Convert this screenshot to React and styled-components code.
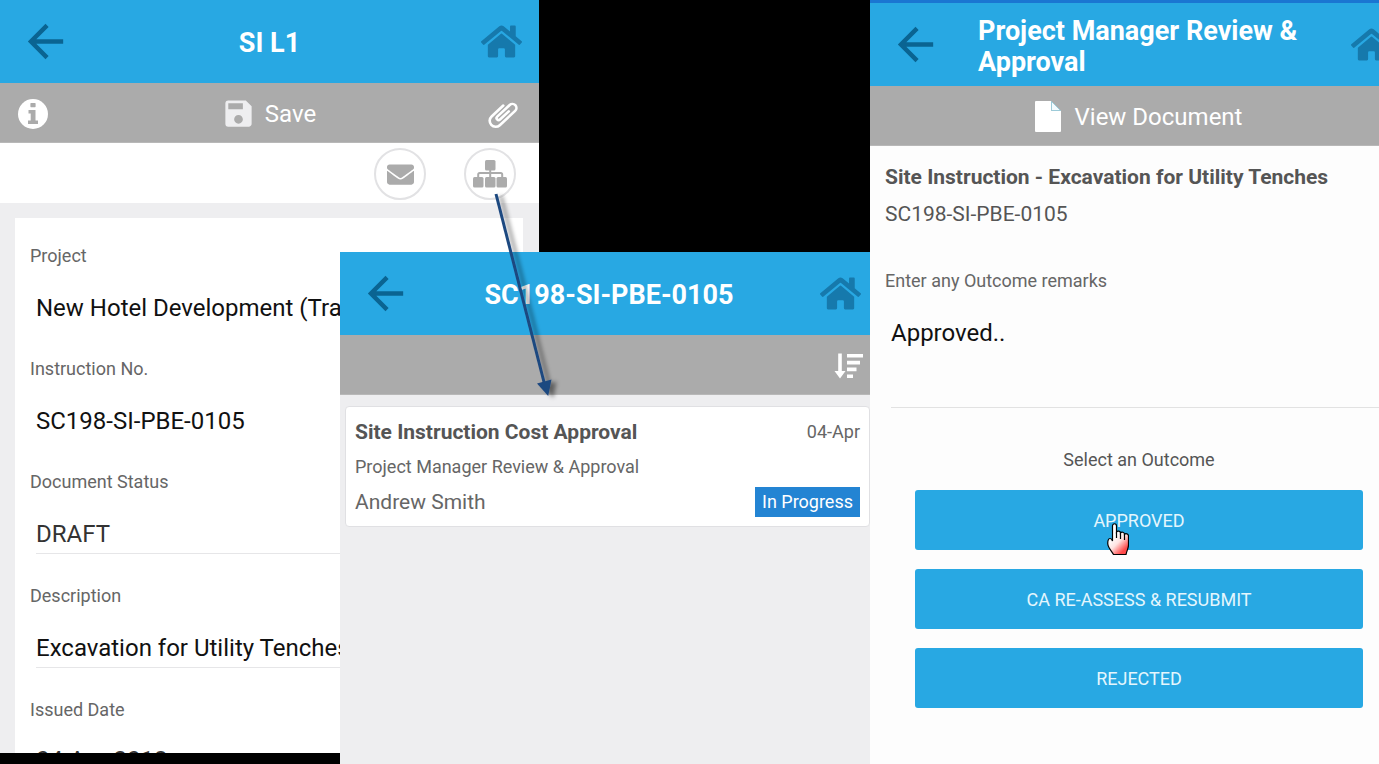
import React from "react";
import styled, { createGlobalStyle, css } from "styled-components";
import { FaEnvelope, FaHome } from "react-icons/fa";
import { MdArrowBack, MdSave } from "react-icons/md";

const GlobalStyle = createGlobalStyle`
  * {
    box-sizing: border-box;
  }

  body {
    margin: 0;
    background: #000;
    font-family: Roboto, "Liberation Sans", sans-serif;
    color: #555;
  }

  h1, h2, p {
    margin: 0;
  }

  button, input, textarea {
    font-family: inherit;
    padding: 0;
    border: 0;
    background: none;
  }
`

const Stage = styled.main`
  display: grid;
  grid-template-columns: 340fr 199fr 331fr 509fr;
  grid-template-rows: 252px minmax(0, 1fr) 11px;
  height: 100vh;
  overflow: hidden;
`

const Frame = styled.section`
  grid-column: ${p => p.$columns};
  grid-row: ${p => p.$rows};
  min-width: 0;
  min-height: 0;
  overflow: hidden;
  background: ${p => p.$background || '#eeeef0'};
`

// a phone screen can be wider than the frame that shows it
const Screen = styled.div`
  width: calc(100% + ${p => p.$overhang || 0}px);
  border-top: ${p => p.$strip ? '3px solid #1a76d2' : '0'};
`

const Header = styled.header`
  display: grid;
  grid-template-columns: 108px 1fr 108px;
  align-items: center;
  height: 83px;
  background: #28a8e3;
`

const Title = styled.h1`
  justify-self: center;
  padding-top: 4px;
  font-size: 27px;
  line-height: 31px;
  font-weight: 700;
  color: #fff;
`

const HeaderButton = styled.button`
  display: flex;
  justify-self: ${p => p.$end ? 'end' : 'start'};
  margin: ${p => p.$end ? '0 17px 0 0' : '0 0 0 19px'};
  color: ${p => p.$end ? '#1679ac' : '#0a6492'};
`

const Toolbar = styled.div`
  display: grid;
  grid-template-columns: 1fr auto 1fr;
  align-items: center;
  height: 60px;
  padding: 2px 20px 0 18px;
  border-bottom: 1px solid #b8b8b8;
  background: #ababab;
`

const ToolButton = styled.button`
  display: flex;
  align-items: center;
  gap: ${p => p.$gap || 0}px;
  grid-column: ${p => p.$column};
  justify-self: ${p => p.$end ? 'end' : 'start'};
  margin-right: ${p => p.$flush ? '-5px' : '0'};
  font-size: 24px;
  line-height: 28px;
  color: #fff;
`

const Actions = styled.div`
  display: flex;
  justify-content: flex-end;
  align-items: center;
  gap: 38px;
  height: 60px;
  padding: 2px 23px 0 0;
  background: #fff;
`

const RoundButton = styled.button`
  display: flex;
  justify-content: center;
  align-items: center;
  width: 52px;
  height: 52px;
  border: 2px solid #e2e2e4;
  border-radius: 50%;
  color: #ababab;
`

const Form = styled.form`
  margin: 15px 16px 0 15px;
  padding: 26px 0 0 15px;
  background: #fff;
`

const Field = styled.div`
  display: flex;
  flex-direction: column;
`

const Label = styled.label`
  font-size: 18px;
  line-height: 24px;
  color: #666;
`

const valueText = css`
  font-size: 24px;
  line-height: 32px;
  color: ${p => p.$muted ? '#333' : '#111'};
  outline: 0;
`

const Value = styled.input`
  ${valueText}
  height: ${p => p.$line ? 40 : 39}px;
  min-width: 0;
  margin: 20px 0 30px 6px;
  border-bottom: ${p => p.$line ? '1px solid #e6e6e8' : '0'};
`

const DateValue = styled(Value)`
  height: 36px;
`

const Card = styled.article`
  display: grid;
  grid-template-columns: 1fr auto;
  align-items: center;
  justify-items: start;
  row-gap: 5px;
  margin: 11px 8px 0 5px;
  padding: 10px 9px 9px;
  border: 1px solid #e0e0e3;
  border-radius: 4px;
  background: #fff;
`

const CardTitle = styled.h2`
  font-size: 21px;
  line-height: 30px;
  font-weight: 700;
`

const CardText = styled.p`
  grid-column: ${p => p.$full ? '1 / -1' : 'auto'};
  justify-self: ${p => p.$end ? 'end' : 'start'};
  font-size: ${p => p.$large ? 21 : 18}px;
  line-height: 30px;
  color: #666;
`

const Status = styled.span`
  padding: 0 7px;
  background: #2384d3;
  font-size: 18px;
  line-height: 30px;
  color: #fff;
`

const Review = styled.div`
  padding: 16px 0 0 15px;
`

const DocumentNumber = styled.p`
  padding: 7px 0 40px;
  font-size: 21px;
  line-height: 30px;
`

const Remarks = styled.textarea`
  ${valueText}
  height: 91px;
  margin: 24px 0 0 6px;
  border-bottom: 1px solid #e2e2e2;
  resize: none;
`

const Outcomes = styled.div`
  display: flex;
  flex-direction: column;
  gap: 19px;
  padding: 40px 46px 0 45px;
`

const OutcomeLabel = styled.p`
  margin-bottom: -1px;
  font-size: 18px;
  line-height: 24px;
  text-align: center;
`

const Outcome = styled.button`
  position: relative;
  height: 60px;
  padding-top: 2px;
  border-radius: 3px;
  background: #28a8e3;
  font-size: 18px;
  line-height: 24px;
  color: #e4f6fd;
`

const Pointer = styled.svg`
  position: absolute;
  top: 33px;
  left: calc(50% - 32px);
`

const ArrowLayer = styled.div`
  grid-column: 1 / 3;
  grid-row: 1 / 3;
  display: flex;
  justify-content: flex-end;
  z-index: 1;
  padding-top: 190px;
  pointer-events: none;

  svg {
    overflow: visible;
  }
`

const fields = [
  { id: 'project', label: 'Project', value: 'New Hotel Development (Tracking)' },
  { id: 'number', label: 'Instruction No.', value: 'SC198-SI-PBE-0105' },
  { id: 'status', label: 'Document Status', value: 'DRAFT', line: true, muted: true },
  { id: 'description', label: 'Description', value: 'Excavation for Utility Tenches', line: true },
]

function ScreenHeader({ title }) {
  return (
    <Header>
      <HeaderButton type="button" aria-label="Back">
        <MdArrowBack size={53} />
      </HeaderButton>
      <Title>{title}</Title>
      <HeaderButton type="button" aria-label="Home" $end>
        <FaHome size={41} />
      </HeaderButton>
    </Header>
  )
}

function InfoIcon() {
  return (
    <svg width="30" height="30" viewBox="0 0 30 30" aria-hidden="true">
      <circle cx="15" cy="15" r="15" fill="#fff" />
      <path
        d="M13 4h4a.6.6 0 0 1 .6.600v3a.6.6 0 0 1-.6.600h-4a.6.6 0 0 1-.6-.6v-3a.6.6 0 0 1 .6-.6zM10.500 11h7v10.500h2.500v3.500H10v-3.500h2.700v-7h-2.200z"
        fill="#ababab"
      />
    </svg>
  )
}

function ClipIcon() {
  return (
    <svg width="32" height="30" viewBox="-16 -15 32 30" aria-hidden="true">
      <path
        d="M6 2H-6a2 2 0 0 1 0-4H11a4 4 0 0 1 0 8H-10a6 6 0 0 1 0-12H6"
        transform="rotate(-43)"
        fill="none"
        stroke="#fff"
        strokeWidth="2.600"
        strokeLinecap="round"
      />
    </svg>
  )
}

function SortIcon() {
  return (
    <svg width="29" height="26" viewBox="0 0 29 26" aria-hidden="true">
      <path d="M4.200.500h3.600v17.500h3.700L6 25.500.500 18h3.700z" fill="#fff" />
      <path d="M13 1h16v3.600H13zM13 7.800h13v3.600H13zM13 14.600h9.500v3.600H13zM13 21.400h6V25h-6z" fill="#fff" />
    </svg>
  )
}

function SitemapIcon() {
  return (
    <svg width="34" height="28" viewBox="0 0 34 28" fill="currentColor" aria-hidden="true">
      <rect x="12" y="0" width="10.500" height="10.500" rx="1.500" />
      <rect x="0" y="17" width="10.500" height="10.500" rx="1.500" />
      <rect x="12" y="17" width="10.500" height="10.500" rx="1.500" />
      <rect x="23.500" y="17" width="10.500" height="10.500" rx="1.500" />
      <path d="M17.200 10v7M5.200 17v-2.500a1.500 1.500 0 0 1 1.500-1.500h21a1.500 1.500 0 0 1 1.500 1.500V17" fill="none" stroke="currentColor" strokeWidth="2" />
    </svg>
  )
}

function DocumentIcon() {
  return (
    <svg width="26" height="31" viewBox="0 0 26 31" aria-hidden="true">
      <path d="M1 0h15v10h10v20a1 1 0 0 1-1 1H1a1 1 0 0 1-1-1V1a1 1 0 0 1 1-1z" fill="#fff" />
      <path d="M16.500 .5v9h9z" fill="#f4fbfe" stroke="#9ccbd9" strokeWidth="1" />
    </svg>
  )
}

function HandPointer() {
  return (
    <Pointer width="22" height="32" viewBox="0 0 22 32" aria-hidden="true">
      <defs>
        <linearGradient id="hand" x1="0.300" y1="0.400" x2="0.700" y2="1">
          <stop offset="0" stopColor="#fff" />
          <stop offset="0.400" stopColor="#ffe3e1" />
          <stop offset="0.900" stopColor="#ff4a4a" />
        </linearGradient>
      </defs>
      <path
        d="M5.500 18V3c0-3 4-3 4 0v6c1-1.500 4-1 4 1 1-1.500 4-.8 4 1.200 1.200-1 4-.5 4 1.800v9c0 3-1.500 5-2.500 9.500H6.500C5.500 29 1 25 .8 21c-.2-3 .5-5.500 2.200-5.500 1.200 0 2 1 2.500 2.500z"
        fill="url(#hand)"
        stroke="#000"
        strokeWidth="1.200"
      />
      <path d="M9.500 9v6M13.500 10v6M17.500 11v6" stroke="#000" strokeWidth="1.200" />
    </Pointer>
  )
}

function LinkArrow() {
  return (
    <ArrowLayer>
      <svg width="49" height="212" viewBox="0 0 49 212" aria-hidden="true">
        <defs>
          <filter id="shadow" x="-50%" y="-10%" width="220%" height="120%">
            <feDropShadow dx="5" dy="2" stdDeviation="2" floodColor="#000" floodOpacity="0.450" />
          </filter>
        </defs>
        <g filter="url(#shadow)">
          <path d="M6 4l49 192" stroke="#1f4880" strokeWidth="3" />
          <path d="M47 193.500l14.500-4-3.300 16.500z" fill="#1f4880" />
        </g>
      </svg>
    </ArrowLayer>
  )
}

function InstructionScreen() {
  return (
    <Frame $columns="1 / 3" $rows="1 / 3">
      <Screen>
        <ScreenHeader title="SI L1" />
        <Toolbar>
          <ToolButton type="button" aria-label="Information" $column={1}>
            <InfoIcon />
          </ToolButton>
          <ToolButton type="button" $column={2} $gap={9}>
            <MdSave size={35} color="#eeeef0" />
            Save
          </ToolButton>
          <ToolButton type="button" aria-label="Attachments" $column={3} $end>
            <ClipIcon />
          </ToolButton>
        </Toolbar>
        <Actions>
          <RoundButton type="button" aria-label="Mail">
            <FaEnvelope size={27} />
          </RoundButton>
          <RoundButton type="button" aria-label="Workflow">
            <SitemapIcon />
          </RoundButton>
        </Actions>
        <Form>
          {fields.map(({ id, label, value, line, muted }) => (
            <Field key={id}>
              <Label htmlFor={id}>{label}</Label>
              <Value id={id} defaultValue={value} $line={line} $muted={muted} />
            </Field>
          ))}
          <Field>
            <Label htmlFor="issued">Issued Date</Label>
            <DateValue id="issued" defaultValue="04-Apr-2018" $line $muted />
          </Field>
        </Form>
      </Screen>
    </Frame>
  )
}

function WorkflowScreen() {
  return (
    <Frame $columns="2 / 4" $rows="2 / 4">
      <Screen $overhang={8}>
        <ScreenHeader title="SC198-SI-PBE-0105" />
        <Toolbar>
          <ToolButton type="button" aria-label="Sort" $column={3} $end $flush>
            <SortIcon />
          </ToolButton>
        </Toolbar>
        <Card>
          <CardTitle>Site Instruction Cost Approval</CardTitle>
          <CardText $end>04-Apr</CardText>
          <CardText $full>Project Manager Review &amp; Approval</CardText>
          <CardText $large>Andrew Smith</CardText>
          <Status>In Progress</Status>
        </Card>
      </Screen>
    </Frame>
  )
}

function ReviewScreen() {
  return (
    <Frame $columns="4 / 5" $rows="1 / 4" $background="#fdfdfd">
      <Screen $overhang={30} $strip>
        <ScreenHeader title="Project Manager Review &amp; Approval" />
        <Toolbar>
          <ToolButton type="button" $column={2} $gap={14}>
            <DocumentIcon />
            View Document
          </ToolButton>
        </Toolbar>
        <Review>
          <CardTitle>Site Instruction - Excavation for Utility Tenches</CardTitle>
          <DocumentNumber>SC198-SI-PBE-0105</DocumentNumber>
          <Field>
            <Label htmlFor="remarks">Enter any Outcome remarks</Label>
            <Remarks id="remarks" defaultValue="Approved.." />
          </Field>
        </Review>
        <Outcomes>
          <OutcomeLabel>Select an Outcome</OutcomeLabel>
          <Outcome type="button">
            APPROVED
            <HandPointer />
          </Outcome>
          <Outcome type="button">CA RE-ASSESS &amp; RESUBMIT</Outcome>
          <Outcome type="button">REJECTED</Outcome>
        </Outcomes>
      </Screen>
    </Frame>
  )
}

export default function App() {
  return (
    <>
      <GlobalStyle />
      <Stage>
        <InstructionScreen />
        <WorkflowScreen />
        <ReviewScreen />
        <LinkArrow />
      </Stage>
    </>
  )
}
